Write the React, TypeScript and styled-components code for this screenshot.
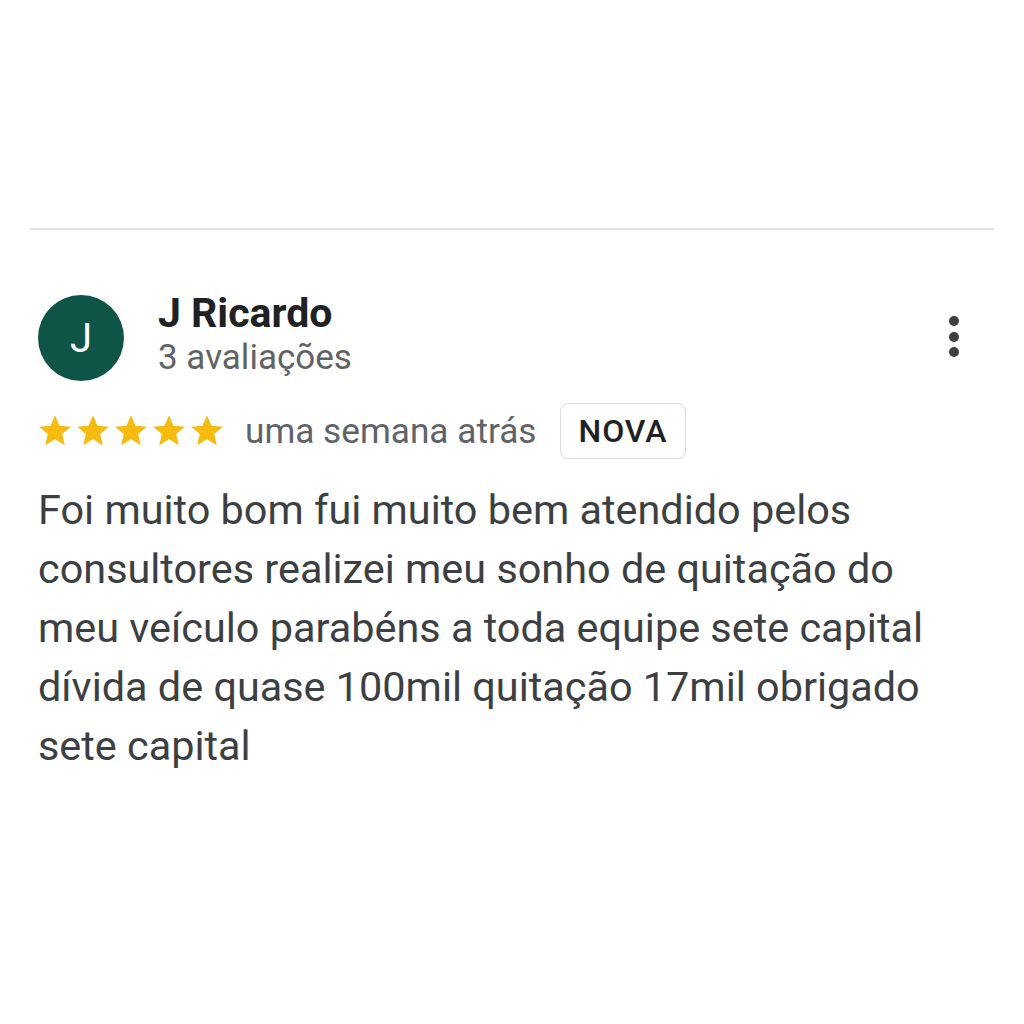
import React from 'react';
import styled, { createGlobalStyle } from 'styled-components';

const GlobalStyle = createGlobalStyle`
  body {
    margin: 0;
    background: #ffffff;
    font-family: Roboto, "Liberation Sans", Arial, sans-serif;
  }
`;

const Page = styled.div`
  width: 1024px;
  height: 1024px;
  padding: 228px 30px 0;
  box-sizing: border-box;
  background: #ffffff;
`;

const Divider = styled.div`
  height: 2px;
  background: #e3e3e3;
`;

const Review = styled.div`
  padding: 0 8px;
`;

const Header = styled.div`
  display: flex;
  align-items: center;
  margin-top: 65px;
`;

const Avatar = styled.div`
  width: 86px;
  height: 86px;
  border-radius: 50%;
  background: #0e5547;
  color: #ffffff;
  display: flex;
  align-items: center;
  justify-content: center;
  font-size: 40px;
  font-weight: 400;
  flex-shrink: 0;
`;

const Author = styled.div`
  display: flex;
  flex-direction: column;
  gap: 6px;
  margin-left: 34px;
  flex: 1;
`;

const Name = styled.span`
  font-size: 41px;
  font-weight: 700;
  color: #202124;
  line-height: 34px;
`;

const Count = styled.span`
  font-size: 35px;
  color: #5f6368;
  line-height: 44px;
`;

const MenuButton = styled.div`
  display: flex;
  flex-direction: column;
  gap: 5.5px;
  margin-right: 27px;
  align-self: flex-start;
  margin-top: 21px;
`;

const Dot = styled.span`
  width: 10px;
  height: 10px;
  border-radius: 50%;
  background: #3c4043;
`;

const Meta = styled.div`
  display: flex;
  align-items: center;
  margin-top: 22px;
`;

const Stars = styled.div`
  display: flex;
  margin-left: -2px;
`;

const When = styled.span`
  font-size: 35.2px;
  color: #5f6368;
  margin-left: 19px;
`;

const Badge = styled.span`
  margin-left: 24px;
  height: 56px;
  box-sizing: border-box;
  padding: 0 17px;
  border: 1.5px solid #dadce0;
  border-radius: 8px;
  display: flex;
  align-items: center;
  font-size: 32px;
  font-weight: 500;
  letter-spacing: 1px;
  color: #202124;
`;

const Body = styled.p`
  margin: 22px 0 0;
  font-size: 41.4px;
  line-height: 59px;
  color: #3c4043;
  width: 932px;
`;

const Star = () => (
  <svg width="38" height="38" viewBox="0 0 24 24">
    <path
      d="M12 17.27L18.18 21l-1.64-7.03L22 9.24l-7.19-.61L12 2 9.19 8.63 2 9.24l5.46 4.73L5.82 21z"
      fill="#f6bb0f"
    />
  </svg>
);

export default function App() {
  return (
    <Page>
      <GlobalStyle />
      <Divider />
      <Review>
        <Header>
          <Avatar>J</Avatar>
          <Author>
            <Name>J Ricardo</Name>
            <Count>3 avaliações</Count>
          </Author>
          <MenuButton>
            <Dot />
            <Dot />
            <Dot />
          </MenuButton>
        </Header>
        <Meta>
          <Stars>
            {[0, 1, 2, 3, 4].map((i) => (
              <Star key={i} />
            ))}
          </Stars>
          <When>uma semana atrás</When>
          <Badge>NOVA</Badge>
        </Meta>
        <Body>
          Foi muito bom fui muito bem atendido pelos consultores realizei meu sonho de quitação do
          meu veículo parabéns a toda equipe sete capital dívida de quase 100mil quitação 17mil
          obrigado sete capital
        </Body>
      </Review>
    </Page>
  );
}
